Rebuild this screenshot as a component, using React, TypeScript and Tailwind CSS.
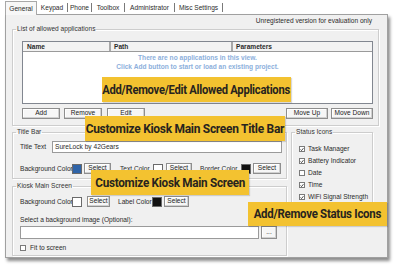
const callout =
  "absolute flex items-center justify-center bg-[#f3c230] text-[#27241f] font-bold text-[13px] tracking-[-0.3px] font-['Roboto',sans-serif] shadow-[1px_1px_1px_rgba(0,0,0,0.15)]";

function Callout({ className, squeeze, children }: { className: string; squeeze: string; children: React.ReactNode }) {
  return (
    <div className={`${callout} ${className}`}>
      <span className={`inline-block whitespace-nowrap ${squeeze}`}>{children}</span>
    </div>
  );
}

function Btn({ children, className = "" }: { children: React.ReactNode; className?: string }) {
  return (
    <div
      className={`flex h-[11px] items-center justify-center border border-[#8e8e8e] bg-[#f6f6f6] leading-none text-[#222] shadow-[inset_-1px_-1px_0_#d0d0d0,inset_1px_1px_0_#ffffff] ${className}`}
    >
      {children}
    </div>
  );
}

function Swatch({ color }: { color: string }) {
  return <div className={`h-[10px] w-[10px] border border-[#6a6a6a] ${color}`} />;
}

function Check({ on }: { on?: boolean }) {
  return (
    <div className="flex h-[6px] w-[6px] shrink-0 items-center justify-center border border-[#7a7a7a] bg-white">
      {on && (
        <svg viewBox="0 0 6 6" className="h-[5px] w-[5px]">
          <path d="M0.8 3 L2.3 4.6 L5.2 1" fill="none" stroke="#222" strokeWidth="1.2" />
        </svg>
      )}
    </div>
  );
}

function Group({ title, className = "", children }: { title: string; className?: string; children: React.ReactNode }) {
  return (
    <fieldset className={`border border-[#cdcdcd] shadow-[inset_1px_1px_0_#ffffff,1px_1px_0_#ffffff] ${className}`}>
      <legend className="ml-[3px] px-[1px] leading-[8px] text-[#333]">{title}</legend>
      {children}
    </fieldset>
  );
}

const tabs = [
  { label: "Keypad", w: "w-[31px]" },
  { label: "Phone", w: "w-[24px]" },
  { label: "Toolbox", w: "w-[33px]" },
  { label: "Administrator", w: "w-[50px]" },
  { label: "Misc Settings", w: "w-[48px]" },
];

const statusIcons = [
  { label: "Task Manager", on: true },
  { label: "Battery Indicator", on: true },
  { label: "Date", on: false },
  { label: "Time", on: true },
  { label: "WiFi Signal Strength", on: true },
];

export default function App() {
  return (
    <div className="relative h-[271px] w-[394px] overflow-hidden bg-white font-['Liberation_Sans',Arial,sans-serif] text-[6.6px] text-[#2b2b2b]">
      {/* tab strip */}
      <div className="ml-[5px] flex h-[14px] items-end">
        <div className="relative z-10 -mb-px flex h-[14px] w-[32px] items-center justify-center border border-b-0 border-[#a8a8a8] bg-[#f7f7f7]">
          General
        </div>
        {tabs.map((t) => (
          <div key={t.label} className={`flex h-[13px] items-center ${t.w}`}>
            <span className="flex-1 whitespace-nowrap text-center">{t.label}</span>
            <span className="h-[9px] w-px bg-[#7a7a7a]" />
          </div>
        ))}
      </div>

      {/* dialog page */}
      <div className="ml-[5px] h-[244px] w-[383px] border border-[#a0a0a0] bg-[#f0f0f0] pl-[6px] shadow-[2px_3px_3px_rgba(0,0,0,0.45)]">
        <div className="mt-[1px] h-[9px] pr-[15px] text-right leading-[9px]">Unregistered version for evaluation only</div>

        <Group title="List of allowed applications" className="w-[367px]">
          <div className="pb-[6px] pl-[9px] pr-[5px] pt-[8px]">
            <div className="h-[63px] border border-[#828790] bg-white">
              <div className="flex h-[10px] border-b border-[#9a9a9a] bg-[#f3f3f3] font-bold leading-[9px]">
                <div className="w-[88px] border-r-2 border-[#a8a8a8] pl-[4px]">Name</div>
                <div className="w-[122px] border-r-2 border-[#a8a8a8] pl-[3px]">Path</div>
                <div className="flex-1 pl-[3px]">Parameters</div>
              </div>
              <div className="mt-[1px] text-center font-bold leading-[9px] text-[#8db0dc]">
                <div>There are no applications in this view.</div>
                <div>Click Add button to start or load an existing project.</div>
              </div>
            </div>
            <div className="mt-[4px] flex">
              <Btn className="w-[38px]">Add</Btn>
              <Btn className="ml-[4px] w-[38px]">Remove</Btn>
              <Btn className="ml-[5px] w-[38px]">Edit</Btn>
              <Btn className="ml-auto w-[42px]">Move Up</Btn>
              <Btn className="ml-[3px] w-[42px]">Move Down</Btn>
            </div>
          </div>
        </Group>

        <div className="mt-[2px] flex gap-[4px]">
          <div className="flex w-[275px] flex-col gap-[3px]">
            <Group title="Title Bar">
              <div className="pb-[4px] pl-[7px] pr-[4px] pt-[5px]">
                <div className="flex h-[12px] items-center">
                  <span className="w-[32px] whitespace-nowrap">Title Text</span>
                  <div className="flex h-[12px] flex-1 items-center border border-[#9a9a9a] bg-white px-[2px]">SureLock by 42Gears</div>
                </div>
                <div className="mt-[10px] flex h-[11px] items-center whitespace-nowrap">
                  <span className="w-[52px]">Background Color</span>
                  <Swatch color="bg-[#2f64a8]" />
                  <Btn className="ml-[2px] w-[27px]">Select</Btn>
                  <span className="ml-[9px] w-[33px]">Text Color</span>
                  <Swatch color="bg-white" />
                  <Btn className="ml-[3px] w-[26px]">Select</Btn>
                  <span className="ml-[8px] w-[41px]">Border Color</span>
                  <Swatch color="bg-[#111]" />
                  <Btn className="ml-[2px] w-[28px]">Select</Btn>
                </div>
              </div>
            </Group>

            <Group title="Kiosk Main Screen">
              <div className="pb-[3px] pl-[7px] pr-[9px] pt-[6px]">
                <div className="flex h-[11px] items-center whitespace-nowrap">
                  <span className="w-[52px]">Background Color</span>
                  <Swatch color="bg-white" />
                  <Btn className="ml-[5px] w-[23px]">Select</Btn>
                  <span className="ml-[8px] w-[34px]">Label Color</span>
                  <Swatch color="bg-[#111]" />
                  <Btn className="ml-[2px] w-[25px]">Select</Btn>
                </div>
                <div className="mt-[9px] leading-[8px]">Select a background image (Optional):</div>
                <div className="mt-[2px] flex h-[13px]">
                  <div className="flex-1 border border-[#9a9a9a] bg-white" />
                  <Btn className="ml-[2px] h-[13px] w-[16px]">...</Btn>
                </div>
                <div className="mt-[5px] flex h-[8px] items-center gap-[4px]">
                  <Check />
                  <span>Fit to screen</span>
                </div>
              </div>
            </Group>
          </div>

          <Group title="Status Icons" className="h-[86px] w-[82px]">
            <div className="flex flex-col gap-[4px] pl-[7px] pt-[9px]">
              {statusIcons.map((s) => (
                <div key={s.label} className="flex h-[8px] items-center gap-[3px]">
                  <Check on={s.on} />
                  <span className="whitespace-nowrap">{s.label}</span>
                </div>
              ))}
            </div>
          </Group>
        </div>
      </div>

      {/* callouts */}
      <Callout squeeze="scale-x-[0.86]" className="left-[102px] top-[77px] h-[25px] w-[189px]">Add/Remove/Edit Allowed Applications</Callout>
      <Callout squeeze="scale-x-[0.92]" className="left-[85px] top-[116px] h-[25px] w-[200px]">Customize Kiosk Main Screen Title Bar</Callout>
      <Callout squeeze="scale-x-[0.9]" className="left-[91px] top-[170px] h-[25px] w-[158px]">Customize Kiosk Main Screen</Callout>
      <Callout squeeze="scale-x-[0.88]" className="left-[248px] top-[202px] h-[24px] w-[139px]">Add/Remove Status Icons</Callout>
    </div>
  );
}
